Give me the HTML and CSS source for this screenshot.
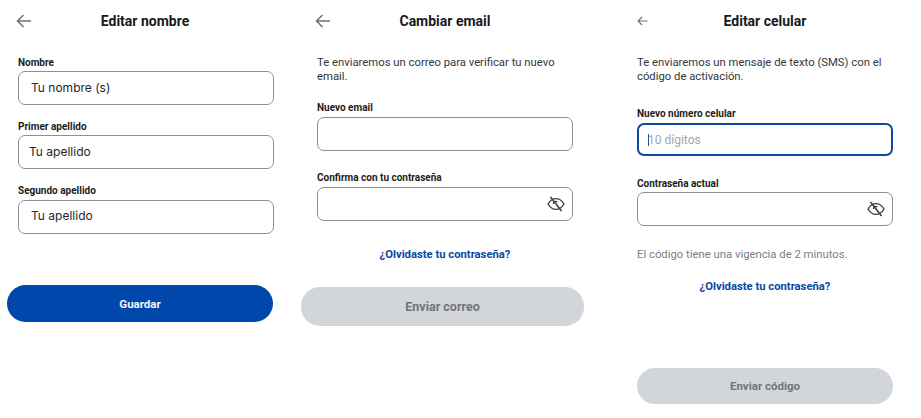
FILE: index.html
```html
<!DOCTYPE html>
<html lang="es">
<head>
<meta charset="utf-8">
<title>Editar datos</title>
<link rel="stylesheet" href="styles.css">
</head>
<body>
<svg class="defs" width="0" height="0" aria-hidden="true">
  <symbol id="eye" viewBox="0 0 18 16">
    <path d="M1 8c2-3.400 4.800-5.400 8-5.400s6 2 8 5.400c-2 3.400-4.800 5.400-8 5.400S3 11.400 1 8z" fill="none" stroke="currentColor" stroke-width="1.400"/>
    <path d="M6.400 8a2.600 2.600 0 0 1 4-2.200" fill="none" stroke="currentColor" stroke-width="1.400"/>
    <path d="M3.500 1 14.500 15" fill="none" stroke="currentColor" stroke-width="1.600"/>
  </symbol>
</svg>
<main class="screens">
  <section class="screen screen-name">
    <header class="top">
      <svg class="back" width="16" height="14" viewBox="0 0 16 14"><path d="M15 7H1.500M7.500 1 1.500 7l6 6" fill="none" stroke="currentColor" stroke-width="1.500"/></svg>
      <h1 class="title">Editar nombre</h1>
    </header>
    <form class="form form-name">
      <label class="label">Nombre</label>
      <div class="field field-tight"><span class="value">Tu nombre (s)</span></div>
      <label class="label label-next">Primer apellido</label>
      <div class="field field-tight field-shift"><span class="value">Tu apellido</span></div>
      <label class="label label-next">Segundo apellido</label>
      <div class="field"><span class="value value-up">Tu apellido</span></div>
    </form>
    <button class="btn btn-primary" type="button">Guardar</button>
  </section>

  <section class="screen screen-email">
    <header class="top">
      <svg class="back" width="16" height="14" viewBox="0 0 16 14"><path d="M15 7H1.500M7.500 1 1.500 7l6 6" fill="none" stroke="currentColor" stroke-width="1.500"/></svg>
      <h1 class="title">Cambiar email</h1>
    </header>
    <div class="form form-email">
      <p class="intro">Te enviaremos un correo para verificar tu nuevo email.</p>
      <label class="label label-first">Nuevo email</label>
      <div class="field"></div>
      <label class="label label-gap">Confirma con tu contraseña</label>
      <div class="field field-icon"><svg class="eye" width="18" height="16"><use href="#eye"/></svg></div>
      <a class="link link-email" href="#">¿Olvidaste tu contraseña?</a>
    </div>
    <button class="btn btn-disabled btn-email" type="button">Enviar correo</button>
  </section>

  <section class="screen screen-phone">
    <header class="top">
      <svg class="back back-small" width="11" height="10" viewBox="0 0 11 10"><path d="M10.500 5H1M5 1 1 5l4 4" fill="none" stroke="currentColor" stroke-width="1.100"/></svg>
      <h1 class="title">Editar celular</h1>
    </header>
    <div class="form form-phone">
      <p class="intro">Te enviaremos un mensaje de texto (SMS) con el código de activación.</p>
      <label class="label label-first-phone">Nuevo número celular</label>
      <div class="field field-focus"><span class="caret"></span><span class="placeholder">10 dígitos</span></div>
      <label class="label label-gap-phone">Contraseña actual</label>
      <div class="field field-tight field-icon"><svg class="eye" width="18" height="16"><use href="#eye"/></svg></div>
      <p class="note">El código tiene una vigencia de 2 minutos.</p>
      <a class="link link-phone" href="#">¿Olvidaste tu contraseña?</a>
    </div>
    <button class="btn btn-disabled btn-phone" type="button">Enviar código</button>
  </section>
</main>
</body>
</html>
```

FILE: styles.css
```css
* { box-sizing: border-box; }
html, body { margin: 0; padding: 0; background: #fff; }
body {
  width: 921px;
  height: 418px;
  overflow: hidden;
  font-family: Roboto, "Liberation Sans", sans-serif;
  color: #1b1d21;
}
.defs { display: block; height: 0; }
.screens {
  display: grid;
  grid-template-columns: 295px 326px 300px;
  height: 418px;
}
.screen { display: flex; flex-direction: column; align-items: flex-start; }
.top {
  display: grid;
  grid-template-columns: auto 1fr;
  align-items: center;
  height: 14px;
  margin-top: 14px;
}
.back { color: #6d717a; display: block; }
.title { margin: 0; font-size: 14px; line-height: 14px; font-weight: 700; text-align: center; color: #17191d; }

.screen-name { padding-left: 16px; }
.screen-name .top { width: 258px; }
.screen-name .title { padding-right: 16px; }
.screen-email { padding-left: 20px; }
.screen-email .top { width: 258px; }
.screen-email .title { padding-right: 14px; }
.screen-phone { padding-left: 16px; }
.screen-phone .top { width: 256px; }
.screen-phone .title { padding-right: 11px; }

.form { width: 256px; display: flex; flex-direction: column; }
.screen-name .form { margin-left: 2px; margin-top: 29px; }
.screen-email .form { margin-left: 2px; margin-top: 28px; }
.screen-phone .form { margin-top: 28px; }

.label { display: block; font-size: 10px; line-height: 12px; font-weight: 700; color: #1b1d21; }
.label-next { margin-top: 16px; }
.field {
  position: relative;
  height: 34px;
  margin-top: 3px;
  padding-left: 12px;
  display: flex;
  align-items: center;
  border: 1px solid #8e9096;
  border-radius: 7px;
  background: #fff;
}
.field-tight { margin-top: 2px; }
.field-shift { padding-left: 10px; }
.value { font-family: Inter, Roboto, sans-serif; font-size: 12px; color: #24262b; position: relative; top: -1px; }
.value-up { top: -2px; }
.field-icon { justify-content: flex-end; padding-right: 7px; }
.eye { color: #3d4046; display: block; }
.field-focus { border: 2px solid #0b4a9e; height: 33px; padding-left: 9px; }
.caret { width: 1px; height: 12px; background: #1f4f9e; }
.placeholder { font-size: 12px; color: #a3a6ac; margin-left: -1px; }

.intro { margin: 0; font-size: 11.300px; line-height: 14px; color: #33363b; }
.label-first { margin-top: 18px; }
.label-gap { margin-top: 21px; }
.label-first-phone { margin-top: 24px; }
.label-gap-phone { margin-top: 22px; }
.note { margin: 22px 0 0; font-size: 11.300px; line-height: 14px; color: #7b7e85; }
.link { align-self: center; font-size: 11.250px; line-height: 14px; font-weight: 700; color: #0a47a0; text-decoration: none; }
.link-email { margin-top: 27px; }
.link-phone { margin-top: 18px; }

.btn {
  display: block;
  border: 0;
  font-family: inherit;
  font-size: 11.500px;
  font-weight: 700;
  border-radius: 19px;
}
.btn-primary { background: #0047ab; color: #f2f5fa; width: 266px; height: 37px; margin-left: -9px; margin-top: 51px; }
.btn-disabled { background: #d2d5da; color: #71747c; }
.btn-email { width: 283px; height: 39px; margin-left: -14px; margin-top: 25px; font-size: 12.500px; }
.btn-phone { width: 256px; height: 36px; margin-top: 74px; }
```
